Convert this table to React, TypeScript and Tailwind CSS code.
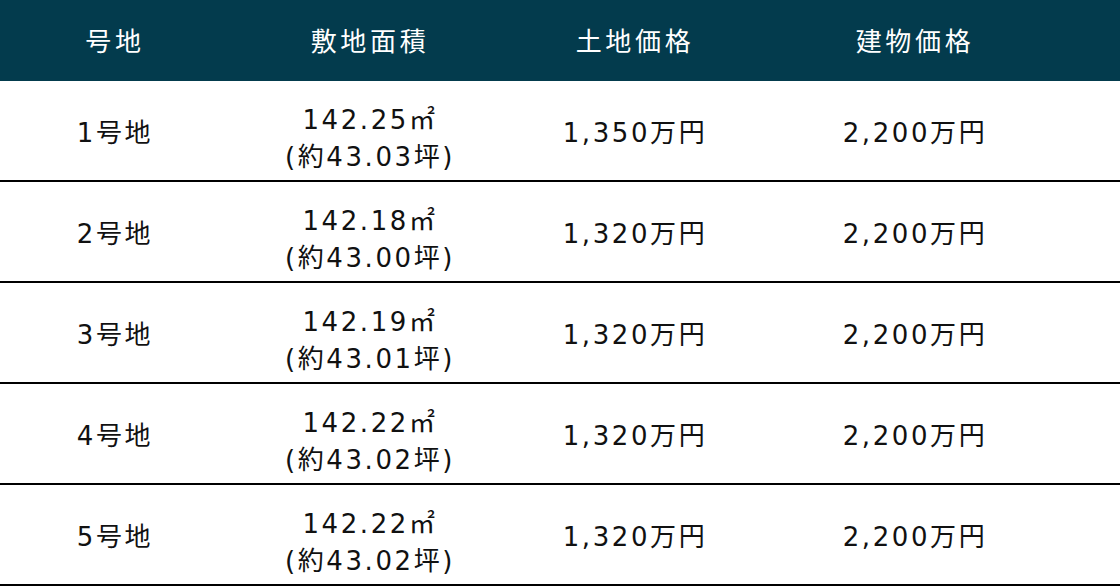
const rows = [
  { no: "1号地", area: "142.25㎡", tsubo: "(約43.03坪)", land: "1,350万円", building: "2,200万円" },
  { no: "2号地", area: "142.18㎡", tsubo: "(約43.00坪)", land: "1,320万円", building: "2,200万円" },
  { no: "3号地", area: "142.19㎡", tsubo: "(約43.01坪)", land: "1,320万円", building: "2,200万円" },
  { no: "4号地", area: "142.22㎡", tsubo: "(約43.02坪)", land: "1,320万円", building: "2,200万円" },
  { no: "5号地", area: "142.22㎡", tsubo: "(約43.02坪)", land: "1,320万円", building: "2,200万円" },
];

const font = "font-['DejaVu_Sans','Noto_Sans_CJK_JP',sans-serif]";

export default function App() {
  return (
    <div className={`w-[1120px] h-[586px] bg-white text-[26px] ${font}`}>
      {/* Header */}
      <div className="grid h-[81px] grid-cols-[230px_280px_250px_310px_1fr] items-center bg-[#033b4d] pt-1 text-white tracking-[0.14em]">
        <div className="text-center">号地</div>
        <div className="text-center">敷地面積</div>
        <div className="text-center">土地価格</div>
        <div className="text-center">建物価格</div>
        <div />
      </div>

      {/* Rows */}
      {rows.map((r) => (
        <div
          key={r.no}
          className="grid h-[101px] grid-cols-[230px_280px_250px_310px_1fr] items-center border-b-2 border-black pt-[6px] text-[#111] tracking-[0.1em]"
        >
          <div className="text-center">{r.no}</div>
          <div className="flex flex-col items-center pt-[10px] leading-[37px]">
            <span>{r.area}</span>
            <span>{r.tsubo}</span>
          </div>
          <div className="text-center">{r.land}</div>
          <div className="text-center">{r.building}</div>
          <div />
        </div>
      ))}
    </div>
  );
}
